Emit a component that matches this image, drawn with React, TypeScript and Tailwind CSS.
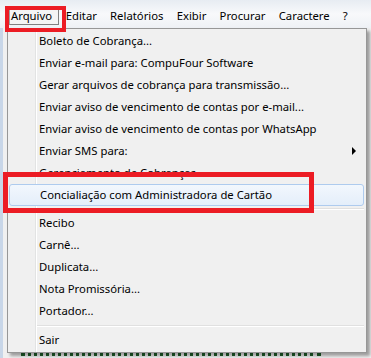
import React from "react";

type Item = { label: string; arrow?: boolean; hl?: boolean } | { sep: number };

const items: Item[] = [
  { label: "Boleto de Cobrança..." },
  { label: "Enviar e-mail para: CompuFour Software" },
  { label: "Gerar arquivos de cobrança para transmissão..." },
  { label: "Enviar aviso de vencimento de contas por e-mail..." },
  { label: "Enviar aviso de vencimento de contas por WhatsApp" },
  { label: "Enviar SMS para:", arrow: true },
  { label: "Gerenciamento de Cobranças" },
  { label: "Concialiação com Administradora de Cartão", hl: true },
  { sep: 6 },
  { label: "Recibo" },
  { label: "Carnê..." },
  { label: "Duplicata..." },
  { label: "Nota Promissória..." },
  { label: "Portador..." },
  { sep: 7 },
  { label: "Sair" },
];

const menubar = ["Editar", "Relatórios", "Exibir", "Procurar", "Caractere", "?"];

export default function App() {
  return (
    <div
      className="relative w-[371px] h-[358px] overflow-hidden bg-[#f0f0f0] text-[11.3px] text-black"
      style={{ fontFamily: '"Noto Sans", "Open Sans", sans-serif' }}
    >
      {/* menu bar */}
      <div className="flex h-[28px] items-center pl-[9px] pt-[4px] bg-gradient-to-b from-[#e7ecf2] via-[#f8f9fb] to-[#eef1f5]">
        <div className="flex h-[17px] items-center border border-t-[#a0a0a0] border-l-[#a0a0a0] border-b-[#808080] border-r-[#808080] bg-[#f4f4f4] pl-[1px] pr-[6px] leading-none">
          Arquivo
        </div>
        {menubar.map((m) => (
          <div key={m} className="px-[6.6px] leading-none">
            {m}
          </div>
        ))}
      </div>

      {/* window content behind the menu */}
      <div className="flex h-[330px] flex-col border-l-[3px] border-[#c8d6e8] bg-[#f0f0f0]">
        <div className="flex-1" />
        <div className="ml-[18px] mb-[1px] h-[4px] w-[300px] border-t-[3px] border-dotted border-[#1f5f2a]" />
      </div>

      {/* dropdown menu */}
      <div className="absolute left-[7px] top-[28px] w-[360px] h-[325px] border border-[#979797] bg-[#f0f0f0] pt-[1px] pl-[1px] pr-[2px] shadow-[3px_3px_3px_rgba(0,0,0,0.35)]">
        <div className="absolute left-[27px] top-0 bottom-0 w-[1px] bg-[#e2e3e3]" />
        <div className="absolute left-[28px] top-0 bottom-0 w-[1px] bg-white" />
        <div className="flex flex-col">
          {items.map((it, i) =>
            "sep" in it ? (
              <div
                key={i}
                className={`flex flex-col justify-center pl-[28px] ${it.sep === 6 ? "h-[6px]" : "h-[7px]"}`}
              >
                <div className="h-[1px] bg-[#e0e0e0]" />
                <div className="h-[1px] bg-white" />
              </div>
            ) : (
              <div
                key={i}
                className={`relative flex h-[22px] items-center pl-[30px] pr-[8px] ${
                  it.hl
                    ? "rounded-[3px] border border-[#aecbee] bg-gradient-to-b from-[#f2f7fd] to-[#e4eefa] pl-[29px]"
                    : ""
                }`}
              >
                <span className="flex-1 whitespace-nowrap">{it.label}</span>
                {it.arrow && (
                  <span className="h-0 w-0 border-y-[4px] border-l-[4px] border-y-transparent border-l-black" />
                )}
              </div>
            )
          )}
        </div>
      </div>

      {/* annotation boxes */}
      <div className="absolute left-[5px] top-[6px] w-[61px] h-[26px] border-[4px] border-[#ec1c24]" />
      <div className="absolute left-[3px] top-[172px] w-[311px] h-[41px] border-[5px] border-[#ec1c24]" />
    </div>
  );
}
